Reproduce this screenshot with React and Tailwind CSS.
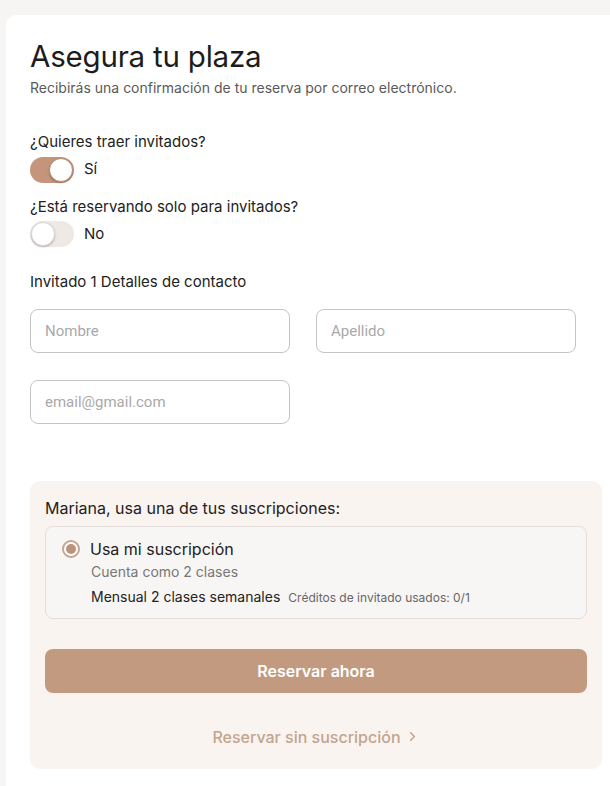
import { ChevronRight } from "lucide-react";

const Toggle = ({ on, label }) => (
  <div className="flex items-center gap-[10px]">
    <div
      className={`flex h-[26px] w-[44px] items-center rounded-full p-[1px] ${
        on ? "justify-end bg-[#c4957a]" : "justify-start bg-[#efe9e6]"
      }`}
    >
      <div
        className={`h-[24px] w-[24px] rounded-full bg-white shadow-[0_1px_2px_rgba(0,0,0,0.25)] ${
          on ? "border border-[#b58a70]" : "border border-[#ddd6d2]"
        }`}
      />
    </div>
    <span className="text-[15px] text-[#222]">{label}</span>
  </div>
);

const Field = ({ placeholder }) => (
  <input
    placeholder={placeholder}
    className="h-[44px] w-[260px] rounded-[8px] border border-[#c4c4c4] bg-white px-[14px] text-[15px] font-['Roboto',sans-serif] text-[#333] placeholder:text-[#a9a9a9] outline-none"
  />
);

export default function App() {
  return (
    <div className="min-h-[786px] bg-[#f6f5f3] pl-[6px] pt-[15px] font-['Inter',sans-serif]">
      <div className="min-h-[771px] rounded-tl-[10px] bg-white pl-[24px] pr-[8px] pt-[23px] pb-[18px]">
        <h1 className="text-[29.5px] leading-[37px] tracking-[-0.2px] text-[#1c1c1c]">
          Asegura tu plaza
        </h1>
        <p className="mt-[3px] text-[14px] leading-[20px] text-[#5a5a5a]">
          Recibirás una confirmación de tu reserva por correo electrónico.
        </p>

        <div className="mt-[33px] text-[15px] text-[#222]">¿Quieres traer invitados?</div>
        <div className="mt-[3px]">
          <Toggle on label="Sí" />
        </div>

        <div className="mt-[13px] text-[15px] text-[#222]">
          ¿Está reservando solo para invitados?
        </div>
        <div className="mt-[3px]">
          <Toggle label="No" />
        </div>

        <div className="mt-[24px] text-[15px] text-[#222]">Invitado 1 Detalles de contacto</div>

        <div className="mt-[15px] flex gap-[26px]">
          <Field placeholder="Nombre" />
          <Field placeholder="Apellido" />
        </div>
        <div className="mt-[27px]">
          <Field placeholder="email@gmail.com" />
        </div>

        <div className="mt-[57px] rounded-[10px] bg-[#faf4f1] px-[15px] pb-[20px] pt-[15px]">
          <div className="text-[16px] leading-[24px] text-[#222]">Mariana, usa una de tus suscripciones:</div>
          <div className="mt-[6px] rounded-[8px] border border-[#e4dfdc] bg-[#f8f6f4] pb-[11px] pl-[16px] pr-[12px] pt-[10px]">
            <div className="flex items-center gap-[10px]">
              <div className="flex h-[18px] w-[18px] items-center justify-center rounded-full border-[2px] border-[#c4a592] bg-white">
                <div className="h-[10px] w-[10px] rounded-full bg-[#bd917b]" />
              </div>
              <span className="text-[16px] text-[#222]">Usa mi suscripción</span>
            </div>
            <div className="pl-[29px] text-[14px] text-[#777]">Cuenta como 2 clases</div>
            <div className="mt-[4px] flex items-baseline gap-[8px] pl-[29px]">
              <span className="text-[14px] text-[#222]">Mensual 2 clases semanales</span>
              <span className="text-[12px] text-[#666]">Créditos de invitado usados: 0/1</span>
            </div>
          </div>

          <button className="mt-[30px] flex h-[44px] w-full items-center justify-center rounded-[8px] bg-[#c29a80] text-[16px] font-semibold text-white">
            Reservar ahora
          </button>

          <div className="mt-[32px] flex items-center justify-center gap-[4px] text-[16px] font-medium text-[#c3a48e]">
            Reservar sin suscripción
            <ChevronRight size={15} strokeWidth={2.5} />
          </div>
        </div>
      </div>
    </div>
  );
}
